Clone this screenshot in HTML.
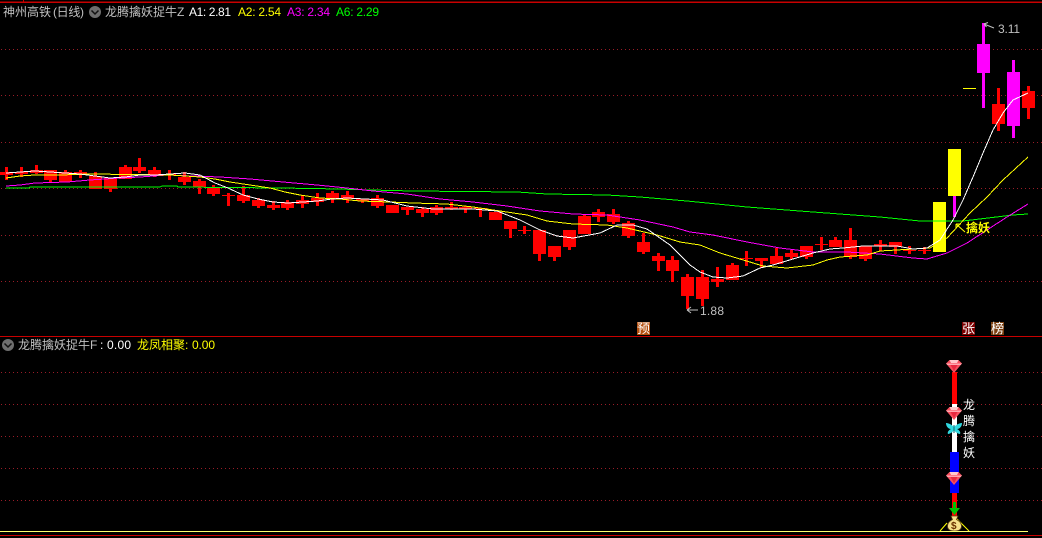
<!DOCTYPE html>
<html><head><meta charset="utf-8"><title>龙腾擒妖捉牛</title>
<style>
html,body{margin:0;padding:0;background:#000;width:1042px;height:538px;overflow:hidden}
svg{display:block;position:absolute;left:0;top:0}
text{font-family:"Liberation Sans","WenQuanYi Zen Hei","Noto Sans CJK SC",sans-serif;font-size:12px}
</style></head><body>
<svg width="1042" height="538" viewBox="0 0 1042 538">
<rect width="1042" height="538" fill="#000"/>
<g stroke="#9a1c28" stroke-width="1" stroke-dasharray="1 3" shape-rendering="crispEdges">
<path d="M1 49.500H1042M1 95.500H1042M1 142.500H1042M1 188.500H1042M1 235.500H1042M1 281.500H1042M1 372.500H1042M1 404.500H1042M1 436.500H1042M1 468.500H1042M1 500.500H1042"/>
</g>
<g stroke="#c80000" shape-rendering="crispEdges" fill="none">
<path d="M0 2H1042" stroke-width="1.5"/><path d="M23.500 0V2"/>
<path d="M0 336.500H1042"/><path d="M0 535.500H1042"/>
</g>
<g fill="none" stroke="#f00" shape-rendering="crispEdges">
<path stroke-width="3" d="M6.500 167V180M21.500 167V177M36.500 165V174M50.500 170V182M65.500 170V182M80.500 170V178M95.500 172V189M110.500 178V192M125.500 165V179M139.500 158V173M154.500 167V177M169.500 170V180M184.500 172V185M199.500 179V194M213.500 185V196M228.500 193V206M243.500 186V203M258.500 198V208M273.500 201V210M287.500 200V210M302.500 195V208M317.500 193V206M332.500 191V203M347.500 191V203M362.500 199V203M377.500 195V208M392.500 205V213M407.500 207V215M422.500 207V217M436.500 205V215M451.500 202V210M465.500 206V213M480.500 208V217M495.500 212V220M510.500 221V238M524.500 226V234M539.500 230V261M554.500 246V261M569.500 230V250M584.500 215V234M598.500 209V222M613.500 209V224M628.500 221V238M643.500 233V254M658.500 253V271M672.500 256V282M687.500 274V309M702.500 270V306M717.500 267V287M732.500 263V280M746.500 251V266M761.500 258V268M776.500 248V264M791.500 250V259M806.500 246V259M821.500 237V250M835.500 237V247M850.500 228V259M865.500 246V261M880.500 240V251M895.500 242V254M909.500 246V254M924.500 247V254M998.500 88V131M1028.500 86V119"/>
<path stroke-width="13" d="M6.500 172V175M21.500 172V174M36.500 170V173M50.500 170V180M65.500 172V182M80.500 172V175M95.500 176V189M110.500 178V189M125.500 167V179M139.500 167V171M154.500 170V175M169.500 174V175M184.500 177V182M199.500 181V187M213.500 187V194M228.500 195V196M243.500 195V201M258.500 200V206M273.500 205V208M287.500 202V208M302.500 200V204M317.500 198V202M332.500 193V199M347.500 195V199M362.500 199V201M377.500 198V206M392.500 205V213M407.500 207V210M422.500 209V213M436.500 207V213M451.500 207V209M465.500 207V209M480.500 208V209M495.500 212V220M510.500 221V229M524.500 230V231M539.500 230V254M554.500 246V257M569.500 230V247M584.500 216V234M598.500 212V217M613.500 214V222M628.500 223V236M643.500 242V252M658.500 256V261M672.500 260V271M687.500 277V296M702.500 277V299M717.500 279V282M732.500 265V280M746.500 258V259M761.500 258V261M776.500 256V264M791.500 253V257M806.500 246V257M821.500 244V245M835.500 240V247M850.500 240V257M865.500 246V259M880.500 244V246M895.500 242V247M909.500 250V251M924.500 250V251M998.500 104V124M1028.500 91V108"/>
</g>
<g fill="#ff0" shape-rendering="crispEdges">
<rect x="933" y="202" width="13" height="50"/>
<rect x="948" y="149" width="13" height="47"/>
<rect x="963" y="88" width="13" height="1"/>
</g>
<g fill="#f0f" shape-rendering="crispEdges">
<rect x="953" y="196" width="3" height="21"/>
<rect x="982" y="23" width="3" height="85"/>
<rect x="977" y="44" width="13" height="29"/>
<rect x="1012" y="60" width="3" height="78"/>
<rect x="1007" y="72" width="13" height="54"/>
</g>
<g fill="none" stroke-width="1" shape-rendering="crispEdges">
<polyline stroke="#0f0" points="6,188 29,188 30,187 160,187 162,186 177,186 178,187 280,188 340,189 370,190 413,191 517,192 547,194 607,195 640,197 687,201 747,207 813,212 880,217 920,221 963,221 1013,215 1028,214"/>
<polyline stroke="#f0f" points="6,186 20,185 35,183 67,182 90,180 120,178 140,177 167,175 193,176 220,177 250,179 283,182 317,185 347,188 373,191 407,194 440,199 473,202 507,206 540,211 573,214 607,215 640,220 673,227 690,232 713,235 747,242 780,248 813,252 847,252 880,254 913,258 927,259 947,253 967,243 987,230 1007,217 1028,204"/>
<polyline stroke="#ff0" points="6,178 20,176 35,175 60,175 90,174 170,175 185,176 200,177 215,179 230,182 250,185 270,188 285,192 300,195 320,198 340,199 360,201 390,202 413,203 447,204 473,207 500,211 527,215 547,221 573,224 607,225 627,228 657,235 680,242 700,245 720,253 740,259 763,266 787,268 813,265 827,260 840,257 867,255 880,251 913,249 930,248 947,238 970,213 987,197 1003,180 1028,157"/>
<polyline stroke="#fff" points="6,173 20,172 35,171 50,172 65,173 80,174 95,176 110,178 125,177 140,175 155,175 170,174 185,173 200,175 215,183 228,188 243,195 258,199 273,202 288,203 303,202 317,201 332,199 347,198 383,200 407,206 433,209 473,209 497,211 520,220 540,230 557,236 573,238 600,233 617,225 633,225 647,229 670,245 680,255 690,265 700,272 713,277 727,278 743,276 760,268 773,265 793,259 813,253 830,249 843,248 863,246 897,246 913,249 927,248 940,240 953,220 963,200 973,177 983,153 993,130 1003,113 1013,100 1028,93"/>
</g>
<text x="3" y="16" fill="#c0c0c0">神州高铁</text>
<text x="53" y="16" fill="#c0c0c0" textLength="31">(日线)</text>
<circle cx="95" cy="12" r="6" fill="#6e6e6e"/>
<path d="M91.500 10.500L95 14L98.500 10.500" fill="none" stroke="#111" stroke-width="1.5"/>
<text x="105" y="16" fill="#c0c0c0">龙腾擒妖捉牛Z</text>
<text x="189" y="16" fill="#fff" textLength="42">A1: 2.81</text>
<text x="238" y="16" fill="#ff0" textLength="43">A2: 2.54</text>
<text x="287" y="16" fill="#f0f" textLength="43">A3: 2.34</text>
<text x="336" y="16" fill="#0f0" textLength="43">A6: 2.29</text>
<path d="M984 24L988 22.500M984 24L986.500 27M984 24L994 28" fill="none" stroke="#c0c0c0"/>
<text x="998" y="33" fill="#c0c0c0" textLength="22">3.11</text>
<path d="M687 310H698M687 310L691 307M687 310L691 313" fill="none" stroke="#c0c0c0"/>
<text x="700" y="315" fill="#c0c0c0" textLength="24">1.88</text>
<path d="M956 224L965 232M956 224H961M956 224V229" fill="none" stroke="#ff0"/>
<text x="966" y="232" fill="#ff0" style="font-weight:bold">擒妖</text>
<rect x="637" y="322" width="13" height="13" fill="#b5500f"/>
<text x="637" y="333" fill="#fff" style="font-size:13px">预</text>
<rect x="962" y="322" width="13" height="13" fill="#7b0000"/>
<text x="962" y="333" fill="#fff" style="font-size:13px">张</text>
<rect x="991" y="322" width="13" height="13" fill="#7a3f10"/>
<text x="991" y="333" fill="#fff" style="font-size:13px">榜</text>
<circle cx="8" cy="345" r="6" fill="#6e6e6e"/>
<path d="M4.500 343.500L8 347L11.500 343.500" fill="none" stroke="#111" stroke-width="1.5"/>
<text x="18" y="349" fill="#c0c0c0">龙腾擒妖捉牛F</text>
<text x="100" y="349" fill="#fff" textLength="31">: 0.00</text>
<text x="137" y="349" fill="#ff0">龙凤相聚:</text>
<text x="192" y="349" fill="#ff0" textLength="23">0.00</text>
<g shape-rendering="crispEdges">
<rect x="952" y="372" width="5" height="32" fill="#f00"/>
<rect x="952" y="404" width="5" height="48" fill="#fff"/>
<rect x="950" y="452" width="9" height="41" fill="#00f"/>
<rect x="952" y="493" width="5" height="24" fill="#f00"/>
</g>
<defs><g id="d"><path d="M-8-3.500L-4.500-7H4.500L8-3.500L0 6Z" fill="#f8505f"/><path d="M-8-3.500H8L6.500-2H-6.500Z" fill="#ffa8b0"/><path d="M-4.500-7H4.500L3-4H-3Z" fill="#ffc8cc"/><path d="M-3.500-2H3.500L0 4Z" fill="#e82840"/></g></defs>
<use href="#d" x="954" y="367"/><use href="#d" x="954" y="414"/><use href="#d" x="954" y="479"/>
<path d="M954 427C951 424 948 423 946 423C946 426 948 429 951 429C949 430 947 432 948 434C950 434 953 432 954 430C955 432 958 434 960 434C961 432 959 430 957 429C960 429 962 426 962 423C960 423 957 424 954 427Z" fill="#30d8e0"/>
<path d="M954 425V433" stroke="#0a6a70" stroke-width="1"/>
<path d="M953 502h3v6h4l-5.500 7l-5.500-7h4z" fill="#00c400"/>
<path d="M940 531L947 523M957 519L969 531" stroke="#ff0" fill="none"/>
<path d="M951 516h7l-1.500 3.500c3 1.500 5 3.500 5 6.500c0 4-3.500 5-7 5s-7-1-7-5c0-3 2-5 5-6.500z" fill="#f6e08a" stroke="#5a3a10" stroke-width=".8"/>
<text x="951" y="529" fill="#6a3000" style="font-size:10px;font-weight:bold">$</text>
<path d="M0 531.500H1028" stroke="#ffff70" stroke-width="1" shape-rendering="crispEdges"/>
<g fill="#fff"><text x="963" y="409">龙</text><text x="963" y="425">腾</text><text x="963" y="441">擒</text><text x="963" y="457">妖</text></g>
</svg>
</body></html>
